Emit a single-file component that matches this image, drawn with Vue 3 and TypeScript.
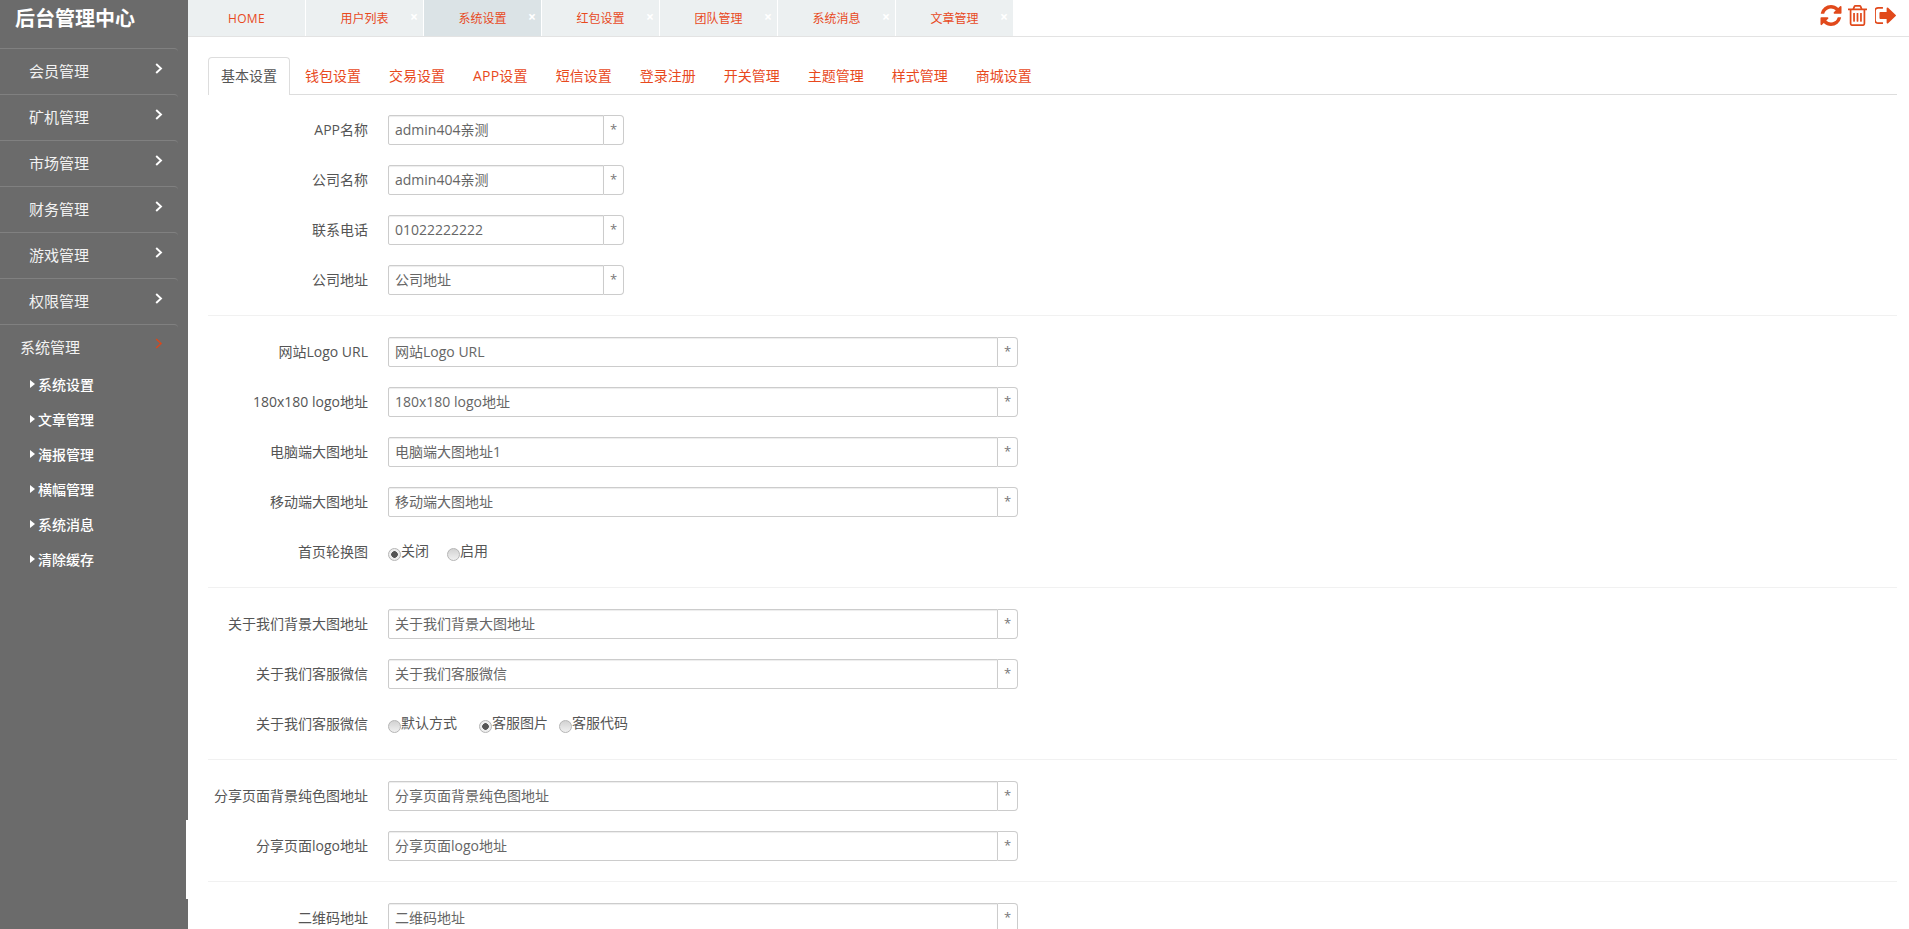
<script setup lang="ts">
interface RadioOption {
  text: string
  checked?: boolean
  gap: number
}

interface FormRow {
  label: string
  value?: string
  wide?: boolean
  radios?: RadioOption[]
}

const menus = ['会员管理', '矿机管理', '市场管理', '财务管理', '游戏管理', '权限管理']
const subMenus = ['系统设置', '文章管理', '海报管理', '横幅管理', '系统消息', '清除缓存']

const pageTabs = ['用户列表', '系统设置', '红包设置', '团队管理', '系统消息', '文章管理']
const activePage = '系统设置'

const settingTabs = [
  '基本设置', '钱包设置', '交易设置', 'APP设置', '短信设置',
  '登录注册', '开关管理', '主题管理', '样式管理', '商城设置',
]

const sections: FormRow[][] = [
  [
    { label: 'APP名称', value: 'admin404亲测' },
    { label: '公司名称', value: 'admin404亲测' },
    { label: '联系电话', value: '01022222222' },
    { label: '公司地址', value: '公司地址' },
  ],
  [
    { label: '网站Logo URL', value: '网站Logo URL', wide: true },
    { label: '180x180 logo地址', value: '180x180 logo地址', wide: true },
    { label: '电脑端大图地址', value: '电脑端大图地址1', wide: true },
    { label: '移动端大图地址', value: '移动端大图地址', wide: true },
    {
      label: '首页轮换图',
      radios: [
        { text: '关闭', checked: true, gap: 18 },
        { text: '启用', gap: 0 },
      ],
    },
  ],
  [
    { label: '关于我们背景大图地址', value: '关于我们背景大图地址', wide: true },
    { label: '关于我们客服微信', value: '关于我们客服微信', wide: true },
    {
      label: '关于我们客服微信',
      radios: [
        { text: '默认方式', gap: 22 },
        { text: '客服图片', checked: true, gap: 11 },
        { text: '客服代码', gap: 0 },
      ],
    },
  ],
  [
    { label: '分享页面背景纯色图地址', value: '分享页面背景纯色图地址', wide: true },
    { label: '分享页面logo地址', value: '分享页面logo地址', wide: true },
  ],
  [
    { label: '二维码地址', value: '二维码地址', wide: true },
  ],
]
</script>

<template>
  <div class="layout">
    <aside class="sidebar">
      <div class="logo">后台管理中心</div>
      <ul class="menu">
        <li v-for="item in menus" :key="item" class="menu-item">
          <span>{{ item }}</span>
          <svg class="chevron" viewBox="0 0 8 11" width="8" height="11">
            <polyline points="1.2,1 6,5.5 1.2,10" fill="none" stroke="currentColor" stroke-width="1.9" />
          </svg>
        </li>
        <li class="menu-item open">
          <span>系统管理</span>
          <svg class="chevron" viewBox="0 0 8 11" width="8" height="11">
            <polyline points="1.2,1 6,5.5 1.2,10" fill="none" stroke="currentColor" stroke-width="1.5" />
          </svg>
        </li>
      </ul>
      <ul class="submenu">
        <li v-for="item in subMenus" :key="item">{{ item }}</li>
      </ul>
      <!-- 侧栏右缘的白条 -->
      <div class="edge-notch"></div>
    </aside>

    <div class="content">
      <header class="topbar">
        <div class="page-tab home">HOME</div>
        <div
          v-for="tab in pageTabs"
          :key="tab"
          class="page-tab"
          :class="{ active: tab === activePage }"
        >
          {{ tab }}
          <span class="close">×</span>
        </div>
        <div class="tools">
          <svg width="22" height="21" viewBox="128 128 1536 1536" fill="currentColor">
            <path d="M1639 1056q0 5-1 7-64 268-268 434.5t-478 166.5q-146 0-282.5-55t-243.5-157l-129 129q-19 19-45 19t-45-19-19-45v-448q0-26 19-45t45-19h448q26 0 45 19t19 45-19 45l-137 137q71 66 161 102t187 36q134 0 250-65t186-179q11-17 53-117 8-23 30-23h192q13 0 22.5 9.5t9.5 22.5zm25-800v448q0 26-19 45t-45 19h-448q-26 0-45-19t-19-45 19-45l138-138q-148-137-349-137-134 0-250 65t-186 179q-11 17-53 117-8 23-30 23h-199q-13 0-22.5-9.5t-9.5-22.5v-7q65-268 270-434.5t480-166.5q146 0 284 55.5t245 156.5l130-129q19-19 45-19t45 19 19 45z" />
          </svg>
          <svg width="19" height="21" viewBox="192 128 1408 1536" preserveAspectRatio="none" fill="currentColor">
            <path d="M704 736v576q0 14-9 23t-23 9h-64q-14 0-23-9t-9-23v-576q0-14 9-23t23-9h64q14 0 23 9t9 23zm256 0v576q0 14-9 23t-23 9h-64q-14 0-23-9t-9-23v-576q0-14 9-23t23-9h64q14 0 23 9t9 23zm256 0v576q0 14-9 23t-23 9h-64q-14 0-23-9t-9-23v-576q0-14 9-23t23-9h64q14 0 23 9t9 23zm128 724v-948h-896v948q0 22 7 40.5t14.5 27 10.5 8.5h832q3 0 10.5-8.5t14.5-27 7-40.5zm-672-1076h448l-48-117q-7-9-17-11h-317q-10 2-17 11zm928 32v64q0 14-9 23t-23 9h-96v948q0 83-47 143.5t-113 60.5h-832q-66 0-113-58.5t-47-141.5v-952h-96q-14 0-23-9t-9-23v-64q0-14 9-23t23-9h309l70-167q15-37 54-63t79-26h320q40 0 79 26t54 63l70 167h309q14 0 23 9t9 23z" />
          </svg>
          <svg width="21" height="17" viewBox="128 256 1504 1280" preserveAspectRatio="none" fill="currentColor">
            <path d="M704 1440q0 4 1 20t.5 26.5-3 23.5-10 19.5-20.5 6.5h-320q-119 0-203.5-84.5t-84.5-203.5v-704q0-119 84.5-203.5t203.5-84.5h320q13 0 22.5 9.5t9.5 22.5q0 4 1 20t.5 26.5-3 23.5-10 19.5-20.5 6.5h-320q-66 0-113 47t-47 113v704q0 66 47 113t113 47h312l11.5 1 11.5 3 8 5.5 7 9 2 13.5zm928-544q0 26-19 45l-544 544q-19 19-45 19t-45-19-19-45v-288h-448q-26 0-45-19t-19-45v-384q0-26 19-45t45-19h448v-288q0-26 19-45t45-19 45 19l544 544q19 19 19 45z" />
          </svg>
        </div>
      </header>

      <main class="main">
        <nav class="setting-tabs">
          <a
            v-for="(tab, i) in settingTabs"
            :key="tab"
            class="setting-tab"
            :class="{ active: i === 0 }"
          >{{ tab }}</a>
        </nav>

        <form class="form">
          <section v-for="(rows, i) in sections" :key="i" class="section">
            <div v-for="(row, j) in rows" :key="j" class="row">
              <label class="row-label">{{ row.label }}</label>
              <div v-if="row.radios" class="radios">
                <label
                  v-for="opt in row.radios"
                  :key="opt.text"
                  class="radio"
                  :style="{ marginRight: opt.gap + 'px' }"
                >
                  <span class="radio-dot" :class="{ checked: opt.checked }"></span>{{ opt.text }}
                </label>
              </div>
              <div v-else class="input-group" :class="{ wide: row.wide }">
                <input class="input" type="text" readonly :value="row.value" />
                <span class="addon">*</span>
              </div>
            </div>
          </section>
        </form>
      </main>
    </div>
  </div>
</template>

<style>
html,
body {
  margin: 0;
  height: 100%;
  overflow: hidden;
  background: #fff;
}
</style>

<style scoped>
.layout {
  display: flex;
  height: 100vh;
  overflow: hidden;
  font-family: "Open Sans", "Noto Sans CJK SC", sans-serif;
  font-size: 14px;
  color: #555;
}

/* sidebar */
.sidebar {
  position: relative;
  flex: 0 0 188px;
  background: #6b6b6b;
  color: #f2f2f2;
}

.logo {
  height: 36px;
  padding-left: 15px;
  font-size: 20px;
  font-weight: 700;
  line-height: 38px;
  color: #fff;
}

.menu,
.submenu {
  margin: 0;
  padding: 0;
  list-style: none;
}

.menu {
  width: 178px;
  margin-top: 12px;
}

.menu-item {
  position: relative;
  height: 45px;
  padding-left: 29px;
  border-top: 1px solid #808080;
  border-top-right-radius: 4px;
  font-size: 15px;
  line-height: 45px;
}

.chevron {
  position: absolute;
  top: 14px;
  left: 155px;
  color: #fff;
}

.menu-item.open {
  padding-left: 20px;
}

.menu-item.open .chevron {
  top: 13px;
  color: #d9481c;
}

.submenu {
  margin-top: -3px;
}

.submenu li {
  position: relative;
  height: 35px;
  padding-left: 38px;
  font-size: 14px;
  font-weight: 500;
  line-height: 35px;
  color: #fff;
}

.submenu li::before {
  content: "";
  position: absolute;
  top: 13px;
  left: 30px;
  border-top: 4px solid transparent;
  border-bottom: 4px solid transparent;
  border-left: 5px solid #fff;
}

.edge-notch {
  position: absolute;
  top: 820px;
  right: 0;
  width: 2px;
  height: 79px;
  background: #fff;
}

/* top bar */
.content {
  flex: 1;
  min-width: 0;
}

.topbar {
  display: flex;
  height: 36px;
  border-bottom: 1px solid #e3e3e3;
}

.page-tab {
  position: relative;
  flex: 0 0 117px;
  margin-right: 1px;
  box-sizing: border-box;
  background: #ecf0f1;
  font-size: 12px;
  line-height: 37px;
  text-align: center;
  color: #e8491d;
}

.page-tab.home {
  letter-spacing: 0.3px;
}

.page-tab.active {
  background: #dbe3e6;
}

.close {
  position: absolute;
  top: -1px;
  right: 5px;
  font-size: 14px;
  font-weight: 700;
  line-height: 36px;
  color: #fff;
}

.tools {
  display: flex;
  gap: 6px;
  align-items: flex-start;
  margin-left: auto;
  padding: 5px 13px 0 0;
  color: #e1491b;
}

.tools svg:last-child {
  margin-top: 2px;
  margin-left: 2px;
}

/* settings */
.main {
  padding: 20px 12px 0 20px;
}

.setting-tabs {
  display: flex;
  gap: 2px;
  border-bottom: 1px solid #ddd;
}

.setting-tab {
  height: 37px;
  margin-bottom: -1px;
  padding: 0 12px;
  border: 1px solid transparent;
  border-bottom: 0;
  border-radius: 4px 4px 0 0;
  font-size: 14px;
  line-height: 36px;
  color: #e8491d;
}

.setting-tab:nth-child(4) {
  letter-spacing: 0.2px;
}

.setting-tab.active {
  border-color: #ddd;
  background: #fff;
  color: #555;
}

.form {
  padding-top: 20px;
}

.section {
  margin-bottom: 21px;
  border-bottom: 1px solid #f1f1f1;
}

.row {
  display: flex;
  align-items: center;
  height: 30px;
  margin-bottom: 20px;
}

.row-label {
  flex: 0 0 180px;
  padding-right: 20px;
  padding-bottom: 2px;
  box-sizing: border-box;
  font-size: 14px;
  text-align: right;
  color: #555;
}

.input-group {
  display: flex;
  width: 236px;
  height: 30px;
  box-sizing: border-box;
}

.input-group.wide {
  width: 630px;
}

.input {
  flex: 1;
  min-width: 0;
  height: 30px;
  padding: 0 6px 2px;
  box-sizing: border-box;
  border: 1px solid #ccc;
  border-radius: 2px 0 0 2px;
  outline: 0;
  box-shadow: inset 0 1px 1px rgba(0, 0, 0, 0.075);
  font-family: inherit;
  font-size: 14px;
  color: #666;
}

.addon {
  flex: 0 0 20px;
  box-sizing: border-box;
  border: 1px solid #ccc;
  border-left: 0;
  border-radius: 0 4px 4px 0;
  font-size: 13px;
  line-height: 27px;
  text-align: center;
  color: #777;
}

.radios {
  display: flex;
  align-items: center;
  padding-bottom: 2px;
}

.radio {
  display: flex;
  align-items: center;
  line-height: 20px;
  font-size: 14px;
  color: #555;
}

.radio-dot {
  position: relative;
  top: 3px;
  width: 11px;
  height: 11px;
  border: 1px solid #b5b5b5;
  border-radius: 50%;
  background: linear-gradient(#d2d2d2, #f0f0f0);
}

.radio-dot.checked {
  background: radial-gradient(circle, #555 0 3px, #eee 3.6px);
}
</style>
